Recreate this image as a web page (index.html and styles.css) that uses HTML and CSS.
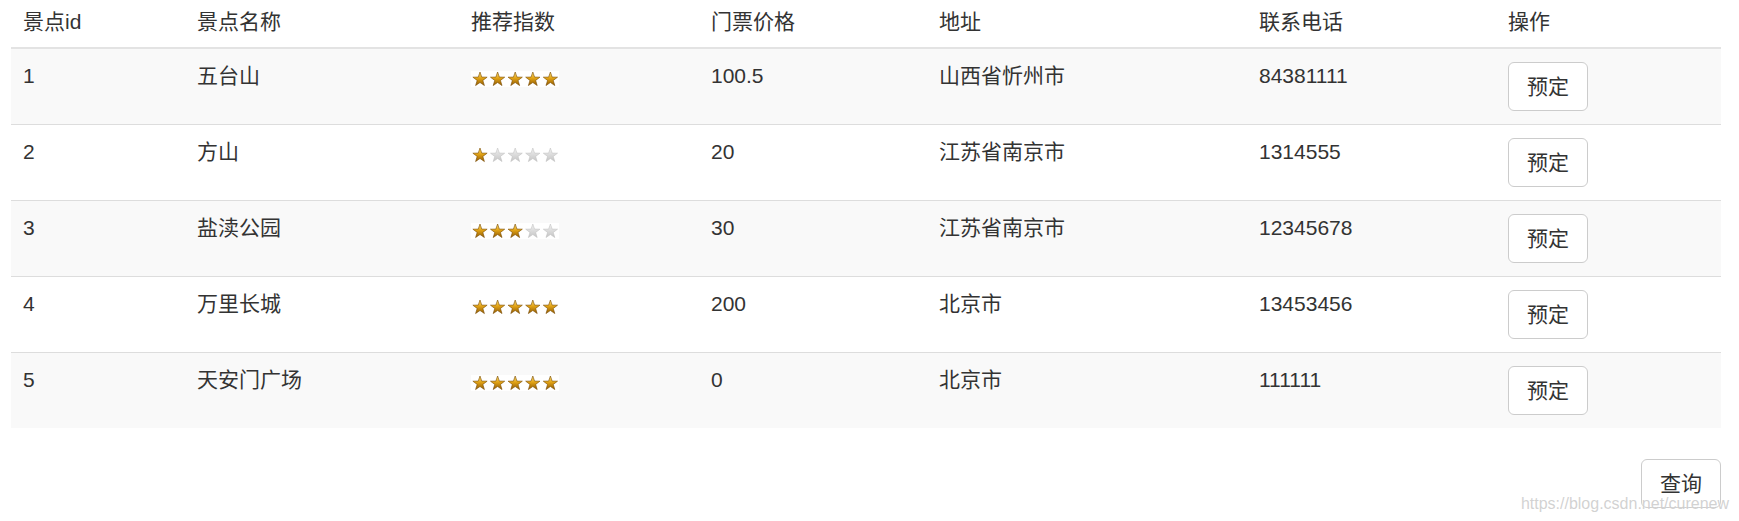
FILE: index.html
```html
<!DOCTYPE html>
<html lang="zh-CN">
<head>
<meta charset="utf-8">
<title>景点列表</title>
<link rel="stylesheet" href="styles.css">
</head>
<body>
<svg class="defs" width="0" height="0" aria-hidden="true">
  <defs>
    <linearGradient id="gold" x1="0" y1="0" x2="0" y2="1">
      <stop offset="0" stop-color="#fbe07a"/>
      <stop offset="0.45" stop-color="#e3a416"/>
      <stop offset="1" stop-color="#8f5a04"/>
    </linearGradient>
    <linearGradient id="grey" x1="0" y1="0" x2="0" y2="1">
      <stop offset="0" stop-color="#f2f2f2"/>
      <stop offset="1" stop-color="#c4c4c4"/>
    </linearGradient>
    <polygon id="star" points="0,-7.5 1.763,-2.427 7.133,-2.318 2.853,0.927 4.408,6.068 0,3 -4.408,6.068 -2.853,0.927 -7.133,-2.318 -1.763,-2.427"/>
  </defs>
</svg>
<div class="page">
  <table class="spots">
    <colgroup>
      <col class="c-id"><col class="c-name"><col class="c-rate"><col class="c-price"><col class="c-addr"><col class="c-tel"><col class="c-op">
    </colgroup>
    <thead>
      <tr><th>景点id</th><th>景点名称</th><th>推荐指数</th><th>门票价格</th><th>地址</th><th>联系电话</th><th>操作</th></tr>
    </thead>
    <tbody>
      <tr>
        <td>1</td><td>五台山</td>
        <td><svg class="stars" width="88" height="16" viewBox="0 0 88 16"><rect width="88" height="16" fill="#fff"/><g fill="url(#gold)" stroke="#7a4c02" stroke-width="0.6"><use href="#star" x="9" y="8.5"/><use href="#star" x="26.6" y="8.5"/><use href="#star" x="44.2" y="8.5"/><use href="#star" x="61.8" y="8.5"/><use href="#star" x="79.4" y="8.5"/></g></svg></td>
        <td>100.5</td><td>山西省忻州市</td><td>84381111</td>
        <td><button class="btn">预定</button></td>
      </tr>
      <tr>
        <td>2</td><td>方山</td>
        <td><svg class="stars" width="88" height="16" viewBox="0 0 88 16"><rect width="88" height="16" fill="#fff"/><g fill="url(#gold)" stroke="#7a4c02" stroke-width="0.6"><use href="#star" x="9" y="8.5"/></g><g fill="url(#grey)" stroke="#bdbdbd" stroke-width="0.5"><use href="#star" x="26.6" y="8.5"/><use href="#star" x="44.2" y="8.5"/><use href="#star" x="61.8" y="8.5"/><use href="#star" x="79.4" y="8.5"/></g></svg></td>
        <td>20</td><td>江苏省南京市</td><td>1314555</td>
        <td><button class="btn">预定</button></td>
      </tr>
      <tr>
        <td>3</td><td>盐渎公园</td>
        <td><svg class="stars" width="88" height="16" viewBox="0 0 88 16"><rect width="88" height="16" fill="#fff"/><g fill="url(#gold)" stroke="#7a4c02" stroke-width="0.6"><use href="#star" x="9" y="8.5"/><use href="#star" x="26.6" y="8.5"/><use href="#star" x="44.2" y="8.5"/></g><g fill="url(#grey)" stroke="#bdbdbd" stroke-width="0.5"><use href="#star" x="61.8" y="8.5"/><use href="#star" x="79.4" y="8.5"/></g></svg></td>
        <td>30</td><td>江苏省南京市</td><td>12345678</td>
        <td><button class="btn">预定</button></td>
      </tr>
      <tr>
        <td>4</td><td>万里长城</td>
        <td><svg class="stars" width="88" height="16" viewBox="0 0 88 16"><rect width="88" height="16" fill="#fff"/><g fill="url(#gold)" stroke="#7a4c02" stroke-width="0.6"><use href="#star" x="9" y="8.5"/><use href="#star" x="26.6" y="8.5"/><use href="#star" x="44.2" y="8.5"/><use href="#star" x="61.8" y="8.5"/><use href="#star" x="79.4" y="8.5"/></g></svg></td>
        <td>200</td><td>北京市</td><td>13453456</td>
        <td><button class="btn">预定</button></td>
      </tr>
      <tr>
        <td>5</td><td>天安门广场</td>
        <td><svg class="stars" width="88" height="16" viewBox="0 0 88 16"><rect width="88" height="16" fill="#fff"/><g fill="url(#gold)" stroke="#7a4c02" stroke-width="0.6"><use href="#star" x="9" y="8.5"/><use href="#star" x="26.6" y="8.5"/><use href="#star" x="44.2" y="8.5"/><use href="#star" x="61.8" y="8.5"/><use href="#star" x="79.4" y="8.5"/></g></svg></td>
        <td>0</td><td>北京市</td><td>111111</td>
        <td><button class="btn">预定</button></td>
      </tr>
    </tbody>
  </table>
  <div class="actions">
    <button class="btn">查询</button>
  </div>
</div>
<div class="watermark">https://blog.csdn.net/curenew</div>
</body>
</html>
```

FILE: styles.css
```css
html, body {
  margin: 0;
  padding: 0;
  background: #fff;
}

body {
  font-family: "Liberation Sans", Arial, "Noto Sans CJK SC", sans-serif;
  font-size: 21px;
  color: #333;
}

.defs {
  display: block;
  width: 0;
  height: 0;
  overflow: hidden;
}

.page {
  width: 1710px;
  padding-left: 11px;
}

.spots {
  width: 1710px;
  table-layout: fixed;
  border-collapse: separate;
  border-spacing: 0;
}

.c-id { width: 174px; }
.c-name { width: 274px; }
.c-rate { width: 240px; }
.c-price { width: 228px; }
.c-addr { width: 320px; }
.c-tel { width: 249px; }
.c-op { width: 225px; }

.spots th {
  text-align: left;
  font-weight: normal;
  line-height: 29px;
  padding: 7px 12px 11px;
  border-bottom: 2px solid #e3e3e3;
}

.spots td {
  vertical-align: top;
  line-height: 29px;
  padding: 12px 12px 13px;
  border-top: 1px solid #ddd;
}

.spots tbody tr:first-child td {
  border-top: 0;
}

.spots tbody tr:nth-child(odd) td {
  background: #f9f9f9;
}

.stars {
  display: inline-block;
  vertical-align: -4px;
}

.btn {
  font-family: "Liberation Sans", Arial, "Noto Sans CJK SC", sans-serif;
  font-size: 21px;
  line-height: 29px;
  color: #333;
  background: #fff;
  border: 1px solid #ccc;
  border-radius: 6px;
  padding: 9px 18px;
  margin: 0;
  display: block;
}

.spots td .btn {
  margin-top: 1px;
}

.actions {
  display: flex;
  justify-content: flex-end;
  margin-top: 31px;
}

.watermark {
  position: absolute;
  top: 495px;
  right: 10px;
  font-family: "Liberation Sans", Arial, sans-serif;
  font-size: 16px;
  line-height: 18px;
  color: rgba(190, 190, 190, 0.7);
  text-shadow: 0 0 1px rgba(255, 255, 255, 0.8);
}
```
